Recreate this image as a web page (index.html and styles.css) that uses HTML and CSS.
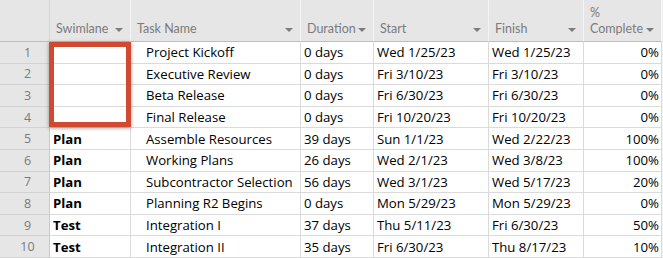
FILE: index.html
```html
<!DOCTYPE html>
<html>
<head>
<meta charset="utf-8">
<link rel="stylesheet" href="styles.css">
</head>
<body>
<div class="sheet">
  <div class="grid">
    <div class="hc rn"></div>
    <div class="hc"><span>Swimlane</span><i class="arr"></i></div>
    <div class="hc"><span>Task Name</span><i class="arr"></i></div>
    <div class="hc"><span>Duration</span><i class="arr"></i></div>
    <div class="hc"><span>Start</span><i class="arr"></i></div>
    <div class="hc"><span>Finish</span><i class="arr"></i></div>
    <div class="hc"><span class="two"><span class="ln">%</span><span class="ln">Complete</span></span><i class="arr"></i></div>

    <div class="c rn">1</div><div class="c sw"></div><div class="c tn">Project Kickoff</div><div class="c du">0 days</div><div class="c dt">Wed 1/25/23</div><div class="c dt">Wed 1/25/23</div><div class="c pc">0%</div>
    <div class="c rn">2</div><div class="c sw"></div><div class="c tn">Executive Review</div><div class="c du">0 days</div><div class="c dt">Fri 3/10/23</div><div class="c dt">Fri 3/10/23</div><div class="c pc">0%</div>
    <div class="c rn">3</div><div class="c sw"></div><div class="c tn">Beta Release</div><div class="c du">0 days</div><div class="c dt">Fri 6/30/23</div><div class="c dt">Fri 6/30/23</div><div class="c pc">0%</div>
    <div class="c rn">4</div><div class="c sw"></div><div class="c tn">Final Release</div><div class="c du">0 days</div><div class="c dt">Fri 10/20/23</div><div class="c dt">Fri 10/20/23</div><div class="c pc">0%</div>
    <div class="c rn">5</div><div class="c sw">Plan</div><div class="c tn">Assemble Resources</div><div class="c du">39 days</div><div class="c dt">Sun 1/1/23</div><div class="c dt">Wed 2/22/23</div><div class="c pc">100%</div>
    <div class="c rn">6</div><div class="c sw">Plan</div><div class="c tn">Working Plans</div><div class="c du">26 days</div><div class="c dt">Wed 2/1/23</div><div class="c dt">Wed 3/8/23</div><div class="c pc">100%</div>
    <div class="c rn">7</div><div class="c sw">Plan</div><div class="c tn">Subcontractor Selection</div><div class="c du">56 days</div><div class="c dt">Wed 3/1/23</div><div class="c dt">Wed 5/17/23</div><div class="c pc">20%</div>
    <div class="c rn">8</div><div class="c sw">Plan</div><div class="c tn">Planning R2 Begins</div><div class="c du">0 days</div><div class="c dt">Mon 5/29/23</div><div class="c dt">Mon 5/29/23</div><div class="c pc">0%</div>
    <div class="c rn">9</div><div class="c sw">Test</div><div class="c tn">Integration I</div><div class="c du">37 days</div><div class="c dt">Thu 5/11/23</div><div class="c dt">Fri 6/30/23</div><div class="c pc">50%</div>
    <div class="c rn">10</div><div class="c sw">Test</div><div class="c tn">Integration II</div><div class="c du">35 days</div><div class="c dt">Fri 6/30/23</div><div class="c dt">Thu 8/17/23</div><div class="c pc">10%</div>
  </div>
  <div class="highlight"></div>
</div>
</body>
</html>
```
FILE: styles.css
```css
* { box-sizing: border-box; }
html, body { margin: 0; padding: 0; background: #ffffff; }
body {
  font-family: "Open Sans", "Noto Sans", sans-serif;
  width: 663px;
  height: 258px;
  overflow: hidden;
}
.sheet {
  position: relative;
  width: 663px;
  height: 258px;
  background: #f3f3f3;
}
.grid {
  display: grid;
  grid-template-columns: 50px 81px 170px 73px 115px 95px 78px;
  grid-template-rows: 42px repeat(10, 21.6px);
  width: 662px;
  background: #ffffff;
}
.hc {
  background: #e6e6e6;
  border-right: 1px solid #f4f4f4;
  border-bottom: 1px solid #bdbdbd;
  color: #7b7b7b;
  font-family: "Lato", "Open Sans", sans-serif;
  font-size: 12.5px;
  line-height: 15px;
  display: flex;
  align-items: flex-end;
  justify-content: space-between;
  padding: 0 7px 5px 6px;
}
.hc.rn { border-right: 1px solid #d6d6d6; }
.two { display: flex; flex-direction: column; }
.ln { display: block; line-height: 15.5px; }
.arr {
  width: 0;
  height: 0;
  border-left: 4px solid transparent;
  border-right: 4px solid transparent;
  border-top: 4px solid #7d7d7d;
  margin-bottom: 4px;
  flex: none;
}
.c {
  border-right: 1px solid #dadada;
  border-bottom: 1px solid #dadada;
  font-size: 13.2px;
  color: #000;
  display: flex;
  align-items: center;
  white-space: nowrap;
  overflow: hidden;
  padding: 0 3px;
}
.c.rn {
  background: #e6e6e6;
  color: #7a7a7a;
  justify-content: center;
  padding-left: 9px;
  border-right: 1px solid #c9c9c9;
  border-bottom: 1px solid #d2d2d2;
  font-size: 12.5px;
}
.c.sw { font-weight: 700; padding-left: 3px; }
.c.tn { padding-left: 15px; }
.c.pc { justify-content: flex-end; padding-right: 2px; }
.highlight {
  position: absolute;
  left: 49px;
  top: 42px;
  width: 82px;
  height: 85px;
  border: 5px solid #cf4a31;
  box-shadow: 0 1px 4px rgba(0,0,0,0.4);
}
```
